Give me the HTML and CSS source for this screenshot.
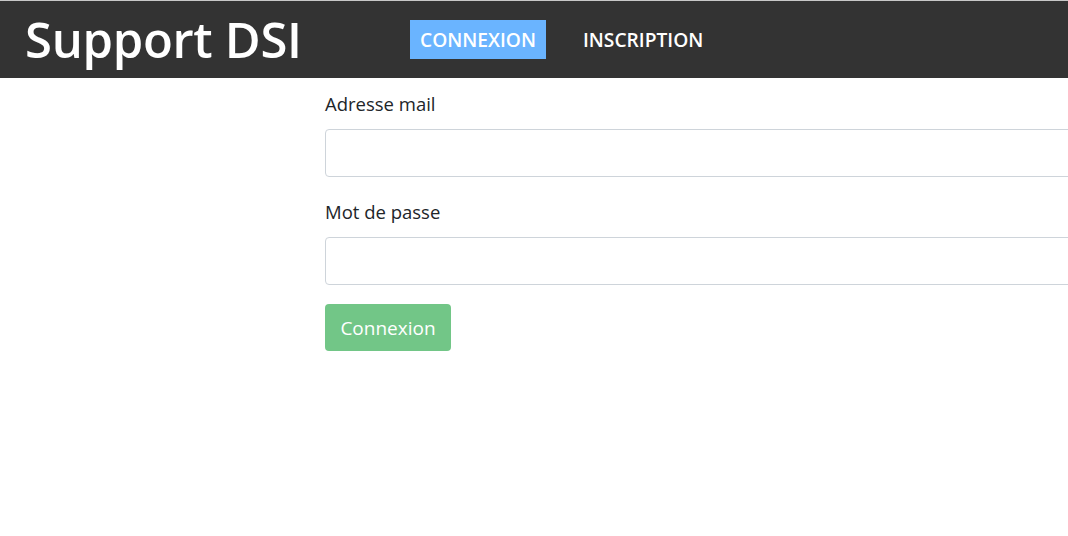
FILE: index.html
```html
<!DOCTYPE html>
<html lang="fr">
<head>
<meta charset="utf-8">
<title>Support DSI</title>
<link rel="stylesheet" href="styles.css">
</head>
<body>
<header class="topbar">
  <h1 class="brand">Support DSI</h1>
  <nav class="nav">
    <a class="nav-link active" href="#">CONNEXION</a>
    <a class="nav-link" href="#">INSCRIPTION</a>
  </nav>
</header>
<main class="main">
  <form class="login">
    <div class="field">
      <label class="label" for="mail">Adresse mail</label>
      <input class="input" id="mail" type="email">
    </div>
    <div class="field">
      <label class="label" for="pass">Mot de passe</label>
      <input class="input" id="pass" type="password">
    </div>
    <button class="btn" type="button">Connexion</button>
  </form>
</main>
</body>
</html>
```
FILE: styles.css
```css
html, body {
  margin: 0;
  padding: 0;
  background: #fff;
  font-family: "Open Sans", "Noto Sans", sans-serif;
  color: #212529;
  overflow: hidden;
}
.topbar {
  display: flex;
  align-items: center;
  height: 77px;
  background: #333333;
  border-top: 1px solid #c8c8c8;
}
.brand {
  margin: 0 0 0 25px;
  width: 385px;
  font-size: 49px;
  font-weight: 600;
  color: #fff;
  line-height: 1;
  letter-spacing: -0.3px;
}
.nav {
  display: flex;
  align-items: center;
  gap: 27px;
}
.nav-link {
  display: block;
  padding: 0 10px;
  height: 39px;
  line-height: 40px;
  font-size: 19.2px;
  font-weight: 600;
  color: #fff;
  text-decoration: none;
}
.nav-link.active {
  background: #6ab4ff;
}
.main {
  padding: 12px 0 0 325px;
}
.login {
  display: flex;
  flex-direction: column;
  width: 760px;
}
.field {
  display: flex;
  flex-direction: column;
  gap: 12px;
  margin-bottom: 21px;
}
.field:last-of-type {
  margin-bottom: 19px;
}
.label {
  font-size: 18.5px;
  line-height: 27px;
  color: #212529;
}
.input {
  box-sizing: border-box;
  height: 48px;
  width: 100%;
  border: 1px solid #ced4da;
  border-radius: 4px;
  background: #fff;
  margin: 0;
}
.btn {
  align-self: flex-start;
  box-sizing: border-box;
  width: 126px;
  height: 47px;
  border: none;
  border-radius: 4px;
  background: #72c687;
  color: #fff;
  font-family: inherit;
  font-size: 19px;
  padding: 0;
}
```
